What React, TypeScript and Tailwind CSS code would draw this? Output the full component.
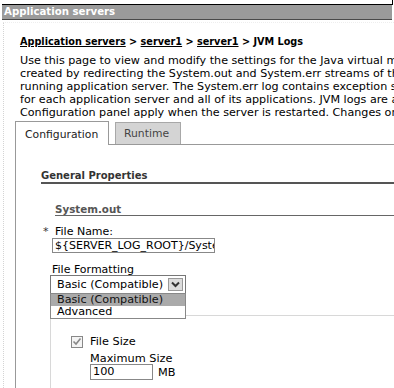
import React from "react";

const desc = [
  "Use this page to view and modify the settings for the Java virtual machine (JVM) System.out and System.err logs",
  "created by redirecting the System.out and System.err streams of the JVM to independent log files. The System.out",
  "running application server. The System.err log contains exception stack trace information that is useful when",
  "for each application server and all of its applications. JVM logs are also created for the deployment manager and",
  "Configuration panel apply when the server is restarted. Changes on the Runtime panel apply immediately.",
];

export default function App() {
  return (
    <div className="relative w-[394px] h-[388px] overflow-hidden bg-white text-black font-['DejaVu_Sans',_Verdana,_sans-serif]">
      <div className="absolute right-[1px] top-0 h-[5px] w-[1px] bg-black" />
      <div className="pt-[4px] pl-[2px] pr-[2px]">
        <div className="h-[16px] bg-[#9b9b9b] border-t border-black border-b border-b-[#4a4a4a] pl-[2px] text-white font-bold text-[10.2px] leading-[14px] whitespace-nowrap">
          Application servers
        </div>
      </div>
      <div className="ml-[3px] mt-[2px] border-l border-[#d4d4d4] border-t border-t-[#eeeeee] border-dotted h-[400px] pl-[11px]">
        <div className="pl-[5px] pt-[13px] text-[9.7px] font-bold leading-[12px] whitespace-nowrap">
          <span className="underline">Application servers</span> &gt; <span className="underline">server1</span> &gt;{" "}
          <span className="underline">server1</span> &gt; JVM Logs
        </div>
        <div className="pl-[5px] pt-[6px] text-[11.15px] leading-[13px] whitespace-nowrap overflow-hidden">
          {desc.map((l) => (
            <div key={l}>{l}</div>
          ))}
        </div>
        <div className="mt-[2px] flex items-end text-[10.8px] leading-[12px] whitespace-nowrap">
          <div className="relative z-10 -mb-px h-[24px] w-[94px] border border-b-0 border-[#999] bg-white pl-[9px] pt-[7px] text-[#222]">
            Configuration
          </div>
          <div className="ml-[6px] h-[22px] w-[66px] border border-b-0 border-[#a8a8a8] bg-[#d4d4d4] pl-[8px] pt-[5px] text-[#444]">
            Runtime
          </div>
        </div>
        <div className="relative w-[520px] h-[260px] border border-[#999] bg-white pl-[25px]">
          <div className="pt-[25px] text-[10px] font-bold leading-[12px] text-[#333] whitespace-nowrap">General Properties</div>
          <div className="h-[2px] bg-[#555]" />
          <div className="pl-[14px] pt-[19px]">
            <div className="text-[10.3px] font-bold leading-[12px] text-[#555] whitespace-nowrap">System.out</div>
            <div className="h-px bg-[#666]" />
          </div>
          <div className="pl-[2px] pt-[9px] flex items-start text-[11px] leading-[13px] whitespace-nowrap">
            <span className="w-[12px] text-[#333]">*</span>
            <span>File Name:</span>
          </div>
          <div className="ml-[11px] h-[15px] w-[163px] border border-[#888] bg-white pl-[2px] text-[11px] leading-[13px] overflow-hidden whitespace-nowrap">
            {"${SERVER_LOG_ROOT}/SystemOut.log"}
          </div>
          <div className="ml-[11px] pt-[10px] text-[11px] leading-[13px] whitespace-nowrap">File Formatting</div>
          <div className="relative ml-[9px] -mt-px w-[136px]">
            <div className="flex h-[19px] items-center justify-between border border-[#777] bg-white pl-[6px] pr-[2px] text-[11.2px] leading-[12px] whitespace-nowrap">
              <span>Basic (Compatible)</span>
              <span className="flex h-[13px] w-[15px] items-center justify-center border border-[#999] bg-[#dcdcdc]">
                <svg width="9" height="7" viewBox="0 0 9 7">
                  <path d="M1 1.5 L4.5 5 L8 1.5" fill="none" stroke="#333" strokeWidth="2" />
                </svg>
              </span>
            </div>
            <div className="absolute left-0 top-[18px] z-20 w-[136px] border border-[#888] bg-white text-[11.2px] leading-[12px] whitespace-nowrap">
              <div className="h-[12px] bg-[#aaaaaa] pl-[6px] text-[#111]">Basic (Compatible)</div>
              <div className="h-[12px] pl-[6px]">Advanced</div>
            </div>
          </div>
          <div className="ml-[9px] mt-[21px] h-[80px] border-l border-t border-[#d8d8d8] pl-[20px] pt-[19px]">
            <div className="flex items-center gap-[7px] text-[11.3px] leading-[13px] whitespace-nowrap">
              <span className="flex h-[12px] w-[12px] items-center justify-center border border-[#888] bg-[#f4f4f4]">
                <svg width="10" height="9" viewBox="0 0 10 9">
                  <path d="M1.5 4.5 L4 7 L8.5 1.5" fill="none" stroke="#888" strokeWidth="1.6" />
                </svg>
              </span>
              <span>File Size</span>
            </div>
            <div className="pl-[19px] pt-[4px] text-[11.3px] leading-[13px] whitespace-nowrap">Maximum Size</div>
            <div className="ml-[19px] -mt-px flex items-center gap-[5px] text-[11.3px] leading-[13px]">
              <div className="h-[16px] w-[63px] border border-[#888] pl-[2px] leading-[14px]">100</div>
              <span>MB</span>
            </div>
          </div>
        </div>
      </div>
    </div>
  );
}
